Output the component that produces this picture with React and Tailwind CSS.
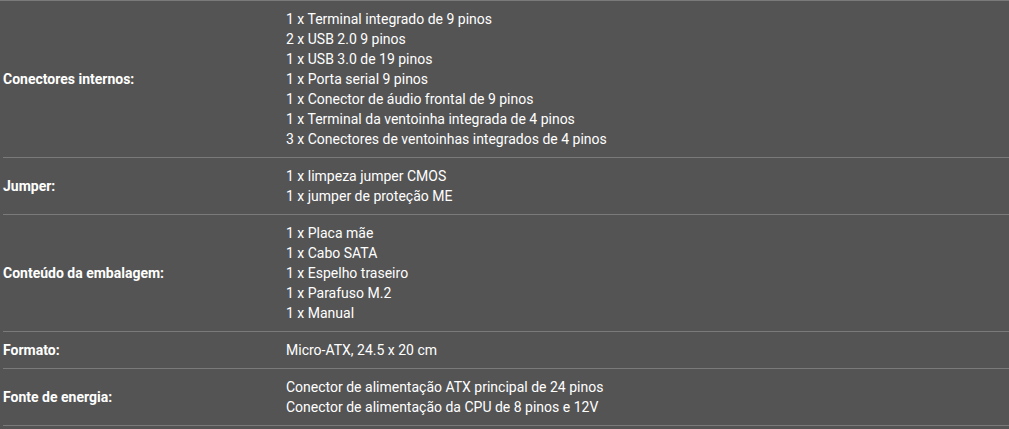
import React from "react";

const specs = [
  {
    label: "Conectores internos:",
    values: [
      "1 x Terminal integrado de 9 pinos",
      "2 x USB 2.0 9 pinos",
      "1 x USB 3.0 de 19 pinos",
      "1 x Porta serial 9 pinos",
      "1 x Conector de áudio frontal de 9 pinos",
      "1 x Terminal da ventoinha integrada de 4 pinos",
      "3 x Conectores de ventoinhas integrados de 4 pinos",
    ],
  },
  {
    label: "Jumper:",
    values: ["1 x limpeza jumper CMOS", "1 x jumper de proteção ME"],
  },
  {
    label: "Conteúdo da embalagem:",
    values: [
      "1 x Placa mãe",
      "1 x Cabo SATA",
      "1 x Espelho traseiro",
      "1 x Parafuso M.2",
      "1 x Manual",
    ],
  },
  {
    label: "Formato:",
    values: ["Micro-ATX, 24.5 x 20 cm"],
  },
  {
    label: "Fonte de energia:",
    values: [
      "Conector de alimentação ATX principal de 24 pinos",
      "Conector de alimentação da CPU de 8 pinos e 12V",
    ],
  },
];

export default function App() {
  return (
    <div
      className="w-[1009px] h-[429px] bg-[#545454] text-white text-[14px] leading-5 overflow-hidden border-t border-[#7a7a7a]"
      style={{ fontFamily: "Roboto, 'Liberation Sans', sans-serif" }}
    >
      <div className="ml-[3px]">
        {specs.map((row) => (
          <div
            key={row.label}
            className="flex items-center border-b border-[#7a7a7a] py-2"
          >
            <div className="w-[283px] shrink-0 font-bold">{row.label}</div>
            <div className="flex flex-col">
              {row.values.map((v) => (
                <span key={v}>{v}</span>
              ))}
            </div>
          </div>
        ))}
      </div>
    </div>
  );
}
